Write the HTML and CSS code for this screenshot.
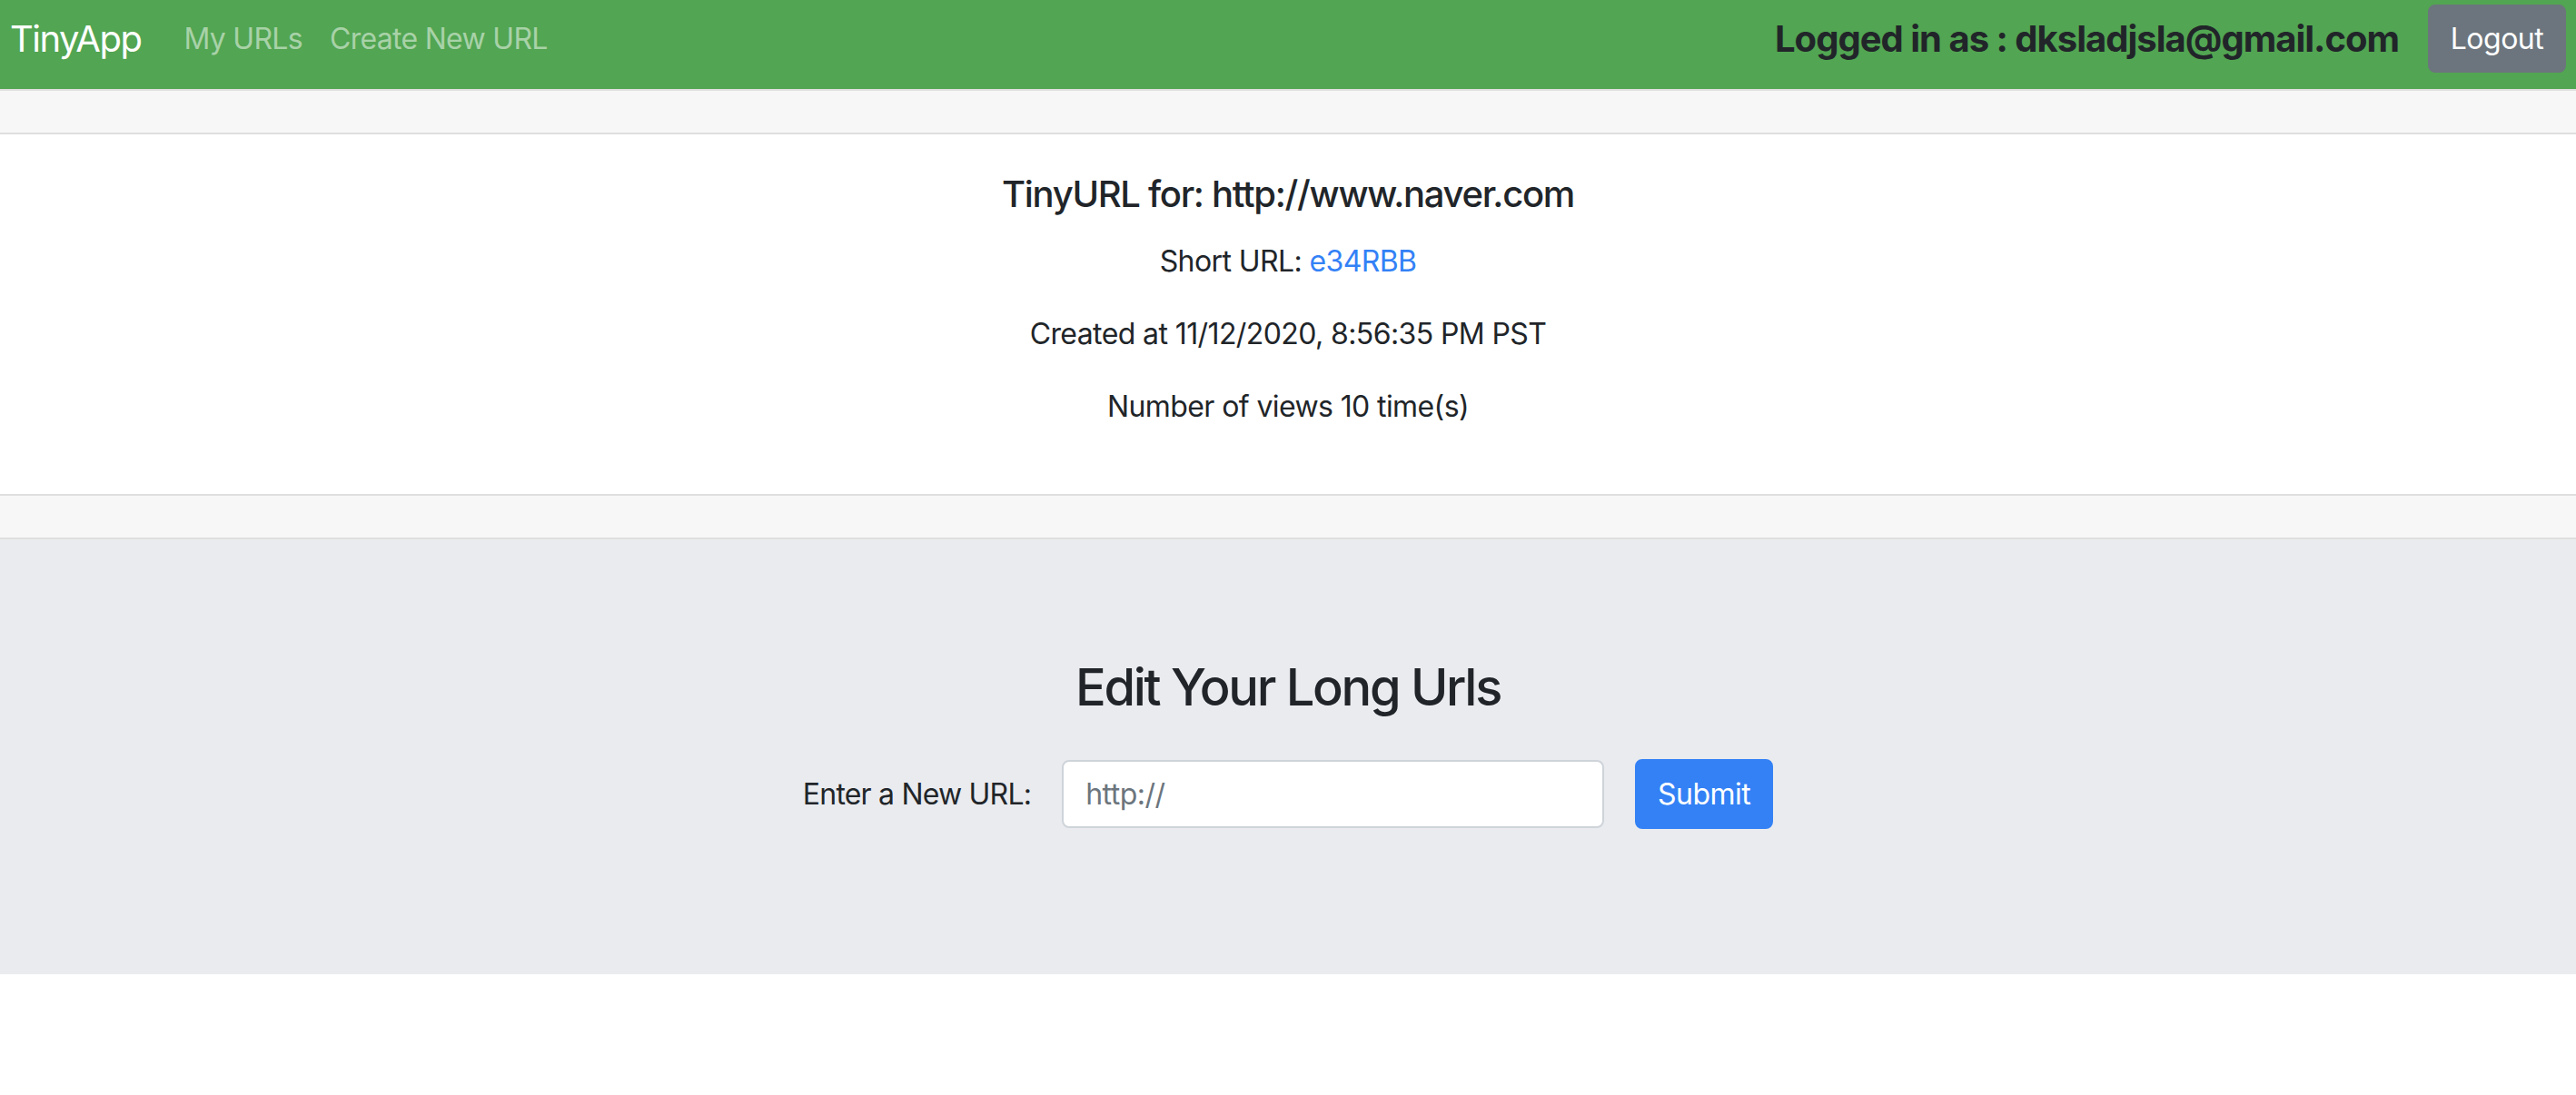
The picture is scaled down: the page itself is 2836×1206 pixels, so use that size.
FILE: index.html
```html
<!DOCTYPE html>
<html lang="en">
<head>
<meta charset="utf-8">
<title>TinyApp</title>
<link rel="stylesheet" href="styles.css">
</head>
<body>
<nav class="navbar">
  <a class="brand" href="#">TinyApp</a>
  <ul class="nav">
    <li><a class="nav-link" href="#">My URLs</a></li>
    <li><a class="nav-link" href="#">Create New URL</a></li>
  </ul>
  <div class="nav-right">
    <span class="user">Logged in as : dksladjsla@gmail.com</span>
    <button class="btn btn-logout" type="button">Logout</button>
  </div>
</nav>

<div class="card">
  <div class="card-header"></div>
  <div class="card-body">
    <h5 class="card-title">TinyURL for: http://www.naver.com</h5>
    <p class="card-text">Short URL: <a class="link" href="#">e34RBB</a></p>
    <p class="card-text">Created at 11/12/2020, 8:56:35 PM PST</p>
    <p class="card-text">Number of views 10 time(s)</p>
  </div>
  <div class="card-footer"></div>
</div>

<section class="jumbotron">
  <h3 class="jumbo-title">Edit Your Long Urls</h3>
  <form class="form-inline">
    <label class="form-label" for="longURL">Enter a New URL:</label>
    <input class="form-control" id="longURL" type="text" placeholder="http://">
    <button class="btn btn-primary" type="button">Submit</button>
  </form>
</section>
</body>
</html>
```

FILE: styles.css
```css
* { box-sizing: border-box; }

body {
  margin: 0;
  font-family: Inter, "Noto Sans", "Liberation Sans", sans-serif;
  font-size: 32px;
  line-height: 1.5;
  letter-spacing: -0.6px;
  color: #212529;
  background: #ffffff;
}

.navbar {
  display: flex;
  align-items: center;
  height: 98px;
  padding: 5px 11px 18px 11px;
  background: #52a552;
}

.brand {
  font-size: 40px;
  line-height: 60px;
  letter-spacing: -1.5px;
  color: #ffffff;
  text-decoration: none;
  margin-right: 32px;
}

.nav {
  display: flex;
  list-style: none;
  margin: 0;
  padding: 0;
}

.nav-link {
  display: block;
  padding: 0 15px;
  font-size: 32px;
  line-height: 48px;
  letter-spacing: -0.7px;
  color: rgba(255, 255, 255, 0.5);
  text-decoration: none;
}

.nav-right {
  margin-left: auto;
  display: flex;
  align-items: center;
  gap: 32px;
}

.user {
  font-size: 40px;
  font-weight: 700;
  line-height: 60px;
  color: #212529;
  letter-spacing: -1px;
}

.btn {
  font-family: inherit;
  font-size: 32px;
  line-height: 48px;
  letter-spacing: -0.5px;
  padding: 12px 24px;
  border: 2px solid transparent;
  border-radius: 8px;
  color: #ffffff;
  cursor: pointer;
}

.btn-logout {
  width: 152px;
  height: 75px;
  padding: 0;
  background: #6c757d;
  border-color: #6c757d;
}

.card {
  border-top: 2px solid #dfdfdf;
  border-bottom: 2px solid #dfe0de;
}

.card-header,
.card-footer {
  height: 48px;
  background: #f7f7f7;
}

.card-header { border-bottom: 2px solid #dfdfdf; }
.card-footer { border-top: 2px solid #dfdfdf; }

.card-body {
  padding: 42px 40px 40px;
  text-align: center;
}

.card-title {
  margin: 0 0 26px;
  font-size: 40px;
  font-weight: 500;
  line-height: 48px;
  letter-spacing: -1.3px;
}

.card-text {
  margin: 0 0 32px;
  font-size: 32px;
  line-height: 48px;
}

.link {
  color: #3381f6;
  text-decoration: none;
}

.jumbotron {
  background: #eaebef;
  padding: 130px 0 160px;
  text-align: center;
}

.jumbo-title {
  margin: 0 0 45px;
  font-size: 56px;
  font-weight: 500;
  line-height: 67px;
  letter-spacing: -2.3px;
}

.form-inline {
  display: flex;
  justify-content: center;
  align-items: center;
  gap: 34px;
}

.form-label {
  font-size: 32px;
  line-height: 48px;
  letter-spacing: -0.8px;
}

.form-control {
  width: 597px;
  height: 75px;
  padding: 12px 24px;
  font-family: inherit;
  font-size: 32px;
  letter-spacing: -0.5px;
  color: #495057;
  background: #ffffff;
  border: 2px solid #ced4da;
  border-radius: 8px;
}

.form-control::placeholder { color: #6c757d; }

.btn-primary {
  width: 152px;
  height: 77px;
  padding: 0;
  background: #3381f5;
  border-color: #3381f5;
}
```
